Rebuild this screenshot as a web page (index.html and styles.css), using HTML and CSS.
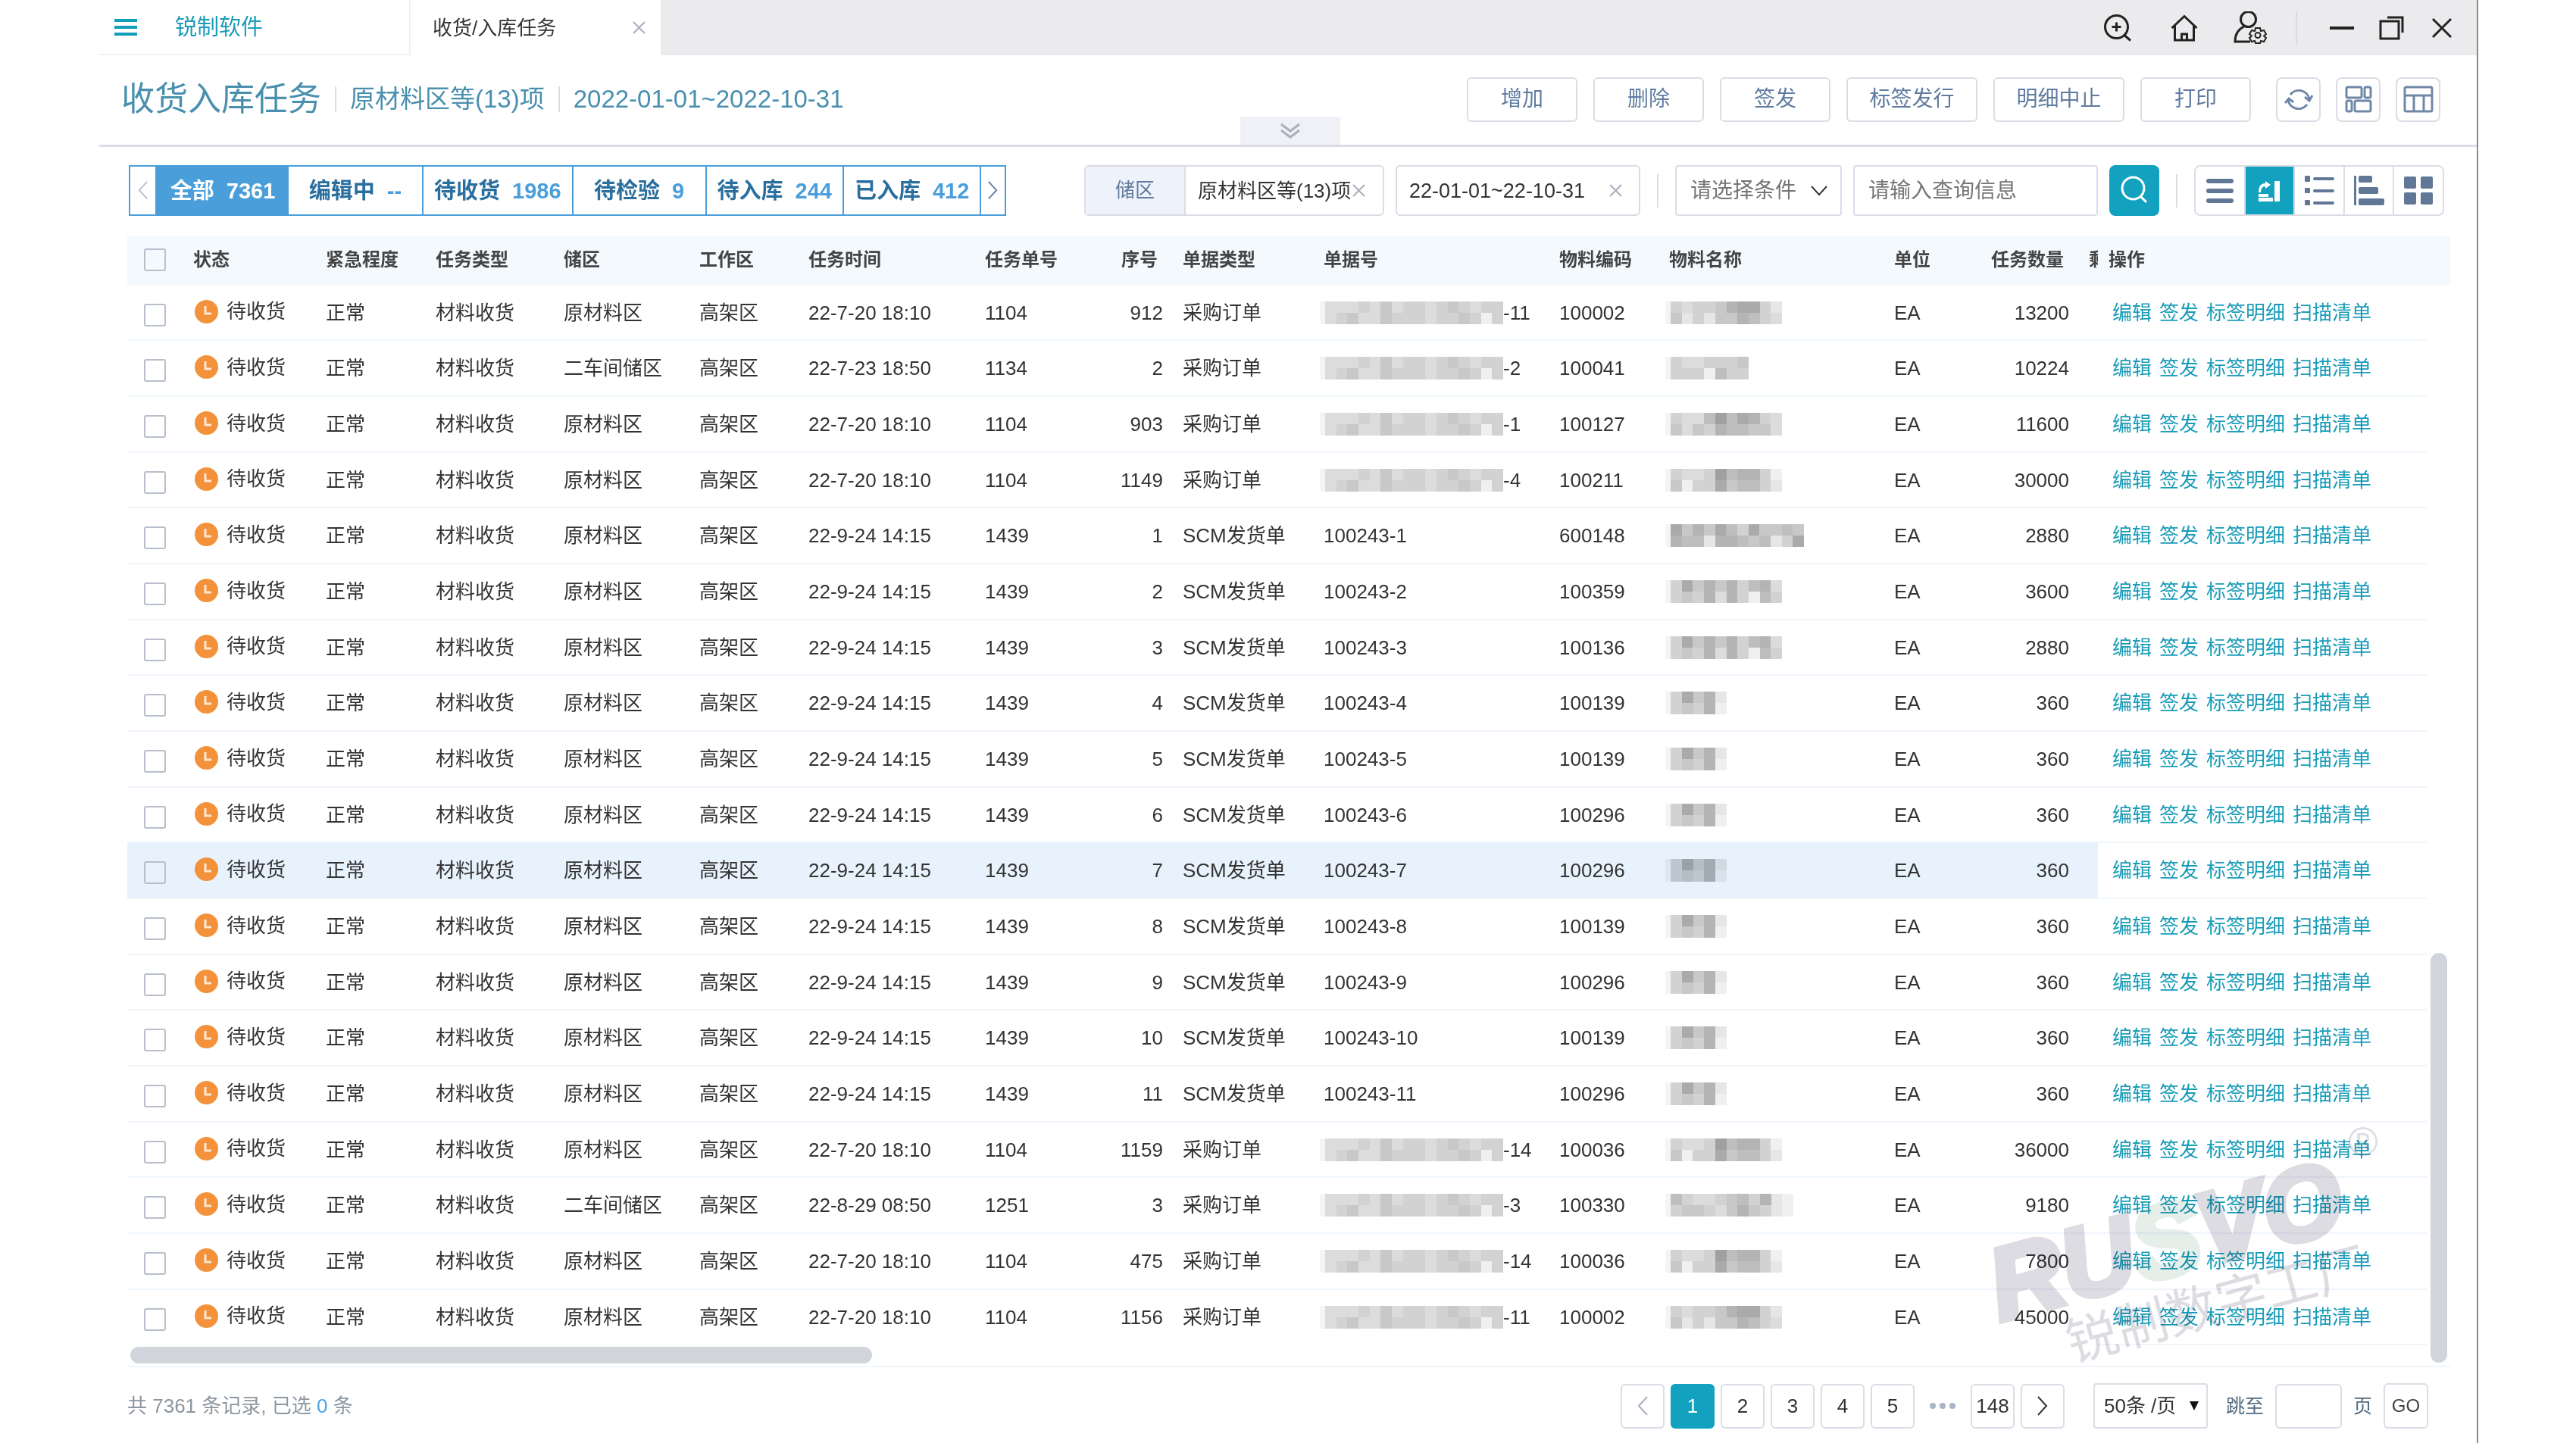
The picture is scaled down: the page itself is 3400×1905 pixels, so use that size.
FILE: index.html
```html
<!DOCTYPE html>
<html lang="zh-CN">
<head>
    <meta charset="UTF-8">
    <meta name="viewport" content="width=device-width, initial-scale=1.0">
    <title>收货入库任务 - 锐制软件</title>
    <link rel="stylesheet" href="styles.css">
</head>
<body>

<div class="window">
    <header class="topbar">
        <div class="brand">
            <button class="menu-btn" aria-label="菜单"><span></span><span></span><span></span></button>
            <a href="#">锐制软件</a>
        </div>
        <div class="tab">
            <span>收货/入库任务</span>
            <button class="close-btn" aria-label="关闭标签"><svg viewBox="0 0 16 16"><path d="M1 1L15 15M15 1L1 15"/></svg></button>
        </div>
        <div class="top-icons">
            <button aria-label="放大"><svg viewBox="0 0 44 44"><circle cx="21.500" cy="20.500" r="15"/><path d="M15.500 20.500h12M21.500 14.500v12M32 31.500l8 7"/></svg></button>
            <button aria-label="首页"><svg viewBox="0 0 44 44"><path d="M6.500 22L23 6.500L39.500 22M10.500 19v19h25V19M19.500 38v-8h7v8"/></svg></button>
            <button aria-label="用户设置"><svg viewBox="0 0 44 44"><circle cx="19.500" cy="10.500" r="10"/><path d="M14 20C5 24 2 31 2 40h20"/><path d="M29 22h6l1 4l4-1l3 5l-3 2.500l3 2.500l-3 5l-4-1l-1 3h-6l-1-3l-4 1l-3-5l3-2.500l-3-2.500l3-5l4 1z" stroke-width="2"/><circle cx="32" cy="31.500" r="3.500" stroke-width="2"/></svg></button>
        </div>
        <div class="win-icons">
            <button aria-label="最小化"><svg viewBox="0 0 44 44"><path d="M6 22h32" stroke-width="4"/></svg></button>
            <button aria-label="还原"><svg viewBox="0 0 44 44"><path d="M8 13h24v23H8zM17 8h20v20"/></svg></button>
            <button aria-label="关闭"><svg viewBox="0 0 44 44"><path d="M12 10l24 24M36 10L12 34"/></svg></button>
        </div>
    </header>

    <section class="page-head">
        <div class="titles">
            <h1>收货入库任务</h1>
            <p>原材料区等(13)项</p>
            <p>2022-01-01~2022-10-31</p>
        </div>
        <div class="actions">
            <button>增加</button>
            <button>删除</button>
            <button>签发</button>
            <button class="wide">标签发行</button>
            <button class="wide">明细中止</button>
            <button>打印</button>
        </div>
        <div class="tools">
            <button aria-label="刷新"><svg viewBox="0 0 40 40"><path d="M9 14A14 14 0 0 1 34 20M31 27A14 14 0 0 1 6 21M28 17l6 5l4-7M2 25l5-6l6 5"/></svg></button>
            <button aria-label="布局"><svg viewBox="0 0 40 40"><rect x="4" y="4" width="20" height="14" rx="2"/><rect x="28" y="4" width="8" height="14" rx="2"/><rect x="4" y="22" width="7" height="14" rx="2"/><rect x="15" y="22" width="21" height="14" rx="2"/></svg></button>
            <button aria-label="列设置"><svg viewBox="0 0 40 40"><rect x="2" y="4" width="36" height="32" rx="2"/><path d="M2 15h36M14 15v21M27 15v21"/></svg></button>
        </div>
        <button class="collapse" aria-label="展开"><svg viewBox="0 0 28 22"><path d="M2 2l12 9L26 2M2 10l12 9l12-9"/></svg></button>
    </section>

    <main>
        <div class="filter-bar">
            <div class="status-tabs">
                <button class="arrow off" aria-label="上一组"><svg viewBox="0 0 16 28"><path d="M14 2L3 14l11 12"/></svg></button>
                <button class="active">全部 <b>7361</b></button>
                <button>编辑中 <b>--</b></button>
                <button>待收货 <b>1986</b></button>
                <button>待检验 <b>9</b></button>
                <button>待入库 <b>244</b></button>
                <button>已入库 <b>412</b></button>
                <button class="arrow" aria-label="下一组"><svg viewBox="0 0 16 28"><path d="M2 2l11 12L2 26"/></svg></button>
            </div>
            <div class="filters">
                <div class="field area">
                    <label for="area">储区</label>
                    <input type="text" id="area" value="原材料区等(13)项">
                    <button class="close-btn" aria-label="清除储区"><svg viewBox="0 0 16 16"><path d="M1 1L15 15M15 1L1 15"/></svg></button>
                </div>
                <div class="field date">
                    <input type="text" aria-label="日期" value="22-01-01~22-10-31">
                    <button class="close-btn" aria-label="清除日期"><svg viewBox="0 0 16 16"><path d="M1 1L15 15M15 1L1 15"/></svg></button>
                </div>
                <span class="sep"></span>
                <div class="select cond">
                    <select aria-label="条件"><option>请选择条件</option></select>
                    <svg viewBox="0 0 24 16"><path d="M2 2l10 11L22 2"/></svg>
                </div>
                <input class="query" type="text" aria-label="查询" placeholder="请输入查询信息">
                <button class="search" aria-label="查询"><svg viewBox="0 0 40 40"><circle cx="18.500" cy="16.500" r="14.500"/><path d="M28 27l8 8"/></svg></button>
                <span class="sep"></span>
                <div class="views">
                    <button aria-label="列表"><svg viewBox="0 0 40 40"><rect x="2" y="4" width="36" height="6" rx="3"/><rect x="2" y="17" width="36" height="6" rx="3"/><rect x="2" y="30" width="36" height="6" rx="3"/></svg></button>
                    <button class="active" aria-label="横向"><svg viewBox="0 0 40 40"><rect x="27" y="7" width="7" height="27"/><rect x="6" y="29" width="19" height="5"/><rect x="6" y="24" width="13" height="4"/><path d="M6 22c0-8 3-12 9-12V7l7 5l-7 5v-3c-4 0-6 3-6 8z"/></svg></button>
                    <button aria-label="明细"><svg viewBox="0 0 40 40"><rect x="1" y="0" width="7" height="8" rx="1"/><rect x="1" y="16" width="7" height="7" rx="1"/><rect x="1" y="32" width="7" height="7" rx="1"/><rect x="12" y="2" width="28" height="4" rx="2"/><rect x="12" y="18" width="28" height="4" rx="2"/><rect x="12" y="34" width="28" height="4" rx="2"/></svg></button>
                    <button aria-label="甘特图"><svg viewBox="0 0 40 40"><rect x="0" y="0" width="3" height="39"/><rect x="6" y="0" width="18" height="9" rx="2"/><rect x="6" y="15" width="26" height="9" rx="2"/><rect x="6" y="30" width="34" height="9" rx="2"/></svg></button>
                    <button aria-label="卡片"><svg viewBox="0 0 40 40"><rect x="1" y="1" width="16" height="16" rx="2"/><rect x="23" y="1" width="16" height="16" rx="2"/><rect x="1" y="22" width="16" height="16" rx="2"/><rect x="23" y="22" width="16" height="16" rx="2"/></svg></button>
                </div>
            </div>
        </div>

        <div class="table-area">
            <table>
                <colgroup>
                    <col class="c-check"><col class="c-status"><col class="c-urgent"><col class="c-type"><col class="c-area">
                    <col class="c-work"><col class="c-time"><col class="c-order"><col class="c-seq"><col class="c-doctype">
                    <col class="c-doc"><col class="c-code"><col class="c-name"><col class="c-unit"><col class="c-qty"><col class="c-left"><col>
                </colgroup>
                <thead>
                    <tr>
                        <th class="check"><input type="checkbox" aria-label="全选"></th>
                        <th>状态</th>
                        <th>紧急程度</th>
                        <th>任务类型</th>
                        <th>储区</th>
                        <th>工作区</th>
                        <th>任务时间</th>
                        <th>任务单号</th>
                        <th class="num">序号</th>
                        <th>单据类型</th>
                        <th>单据号</th>
                        <th>物料编码</th>
                        <th>物料名称</th>
                        <th>单位</th>
                        <th class="num">任务数量</th>
                        <th class="cut">剩</th>
                        <th class="ops">操作</th>
                    </tr>
                </thead>
                <tbody id="rows"></tbody>
            </table>
            <div class="gutter">
                <div class="gutter-head"></div>
                <div class="v-thumb"></div>
            </div>
        </div>
        <div class="h-track"><div class="h-thumb"></div></div>

        <footer>
            <p class="total">共 7361 条记录, 已选 <b>0</b> 条</p>
            <nav class="pages">
                <button class="off" aria-label="上一页"><svg viewBox="0 0 16 28"><path d="M14 2L3 14l11 12"/></svg></button>
                <button class="active">1</button>
                <button>2</button>
                <button>3</button>
                <button>4</button>
                <button>5</button>
                <span class="dots"><i></i><i></i><i></i></span>
                <button>148</button>
                <button aria-label="下一页"><svg viewBox="0 0 16 28"><path d="M2 2l11 12L2 26"/></svg></button>
            </nav>
            <div class="select size">
                <select aria-label="每页条数"><option>50条 /页</option></select>
                <svg viewBox="0 0 12 12"><path d="M0 0h12L6 12z"/></svg>
            </div>
            <div class="jump">
                <label for="jump">跳至</label>
                <input type="text" id="jump">
                <span>页</span>
                <button>GO</button>
            </div>
        </footer>
    </main>

    <svg class="watermark" viewBox="0 0 520 320" aria-hidden="true">
        <text class="logo" x="20" y="254" transform="rotate(-15 20 254)">RU<tspan class="leaf">S</tspan>VO</text>
        <text class="slogan" x="115" y="308" transform="rotate(-15 115 308)">锐制数字工厂</text>
        <text class="reg" x="479" y="36">®</text>
    </svg>
</div>

<script src="script.js"></script>
</body>
</html>
```
FILE: styles.css
```css
* {
    box-sizing: border-box;
}

body {
    margin: 0;
    background-color: #fff;
    color: #333;
    font-family: "Liberation Sans", "Noto Sans CJK SC", sans-serif;
    font-size: 26px;
    line-height: 36px;
}

h1, p {
    margin: 0;
    font-weight: normal;
}

button, input, select {
    margin: 0;
    padding: 0;
    border: none;
    background: none;
    color: inherit;
    font: inherit;
}

button {
    cursor: pointer;
}

a {
    color: #1a9cb8;
    text-decoration: none;
}

svg {
    display: block;
    fill: none;
    stroke: currentColor;
    stroke-width: 2;
}

.window {
    position: relative;
    min-height: 100vh;
    margin: 0 129px 0 131px;
    border-right: 2px solid #8c8c8c;
}

/* top bar */
.topbar {
    display: flex;
    align-items: center;
    height: 73px;
    padding-right: 26px;
    background-color: #ebebed;
}

.brand {
    display: flex;
    align-items: center;
    gap: 50px;
    width: 411px;
    height: 73px;
    padding-left: 20px;
    background-color: #fff;
    border-right: 2px solid #eef1f8;
    border-bottom: 2px solid #eef1f8;
    font-size: 29px;
}

.menu-btn {
    display: flex;
    flex-direction: column;
    gap: 5px;
    width: 30px;
}

.menu-btn span {
    height: 4px;
    background-color: #0f9fbc;
}

.tab {
    display: flex;
    align-items: center;
    justify-content: space-between;
    width: 330px;
    height: 73px;
    padding: 0 20px 0 29px;
    background-color: #fff;
}

.close-btn {
    width: 17px;
    color: #a9b0bc;
}

.top-icons, .win-icons {
    display: flex;
    color: #222;
}

.top-icons svg, .win-icons svg {
    width: 44px;
    stroke-width: 3;
}

.top-icons {
    gap: 44px;
    margin-left: auto;
    padding-right: 38px;
    border-right: 2px solid #d9dae4;
}

.win-icons {
    gap: 21px;
    padding-left: 37px;
}

/* page head */
.page-head {
    position: relative;
    display: flex;
    align-items: center;
    height: 121px;
    padding: 0 48px 2px 29px;
    border-bottom: 3px solid #dcdce6;
}

.titles {
    display: flex;
    align-items: center;
    color: #4a90ae;
}

.titles h1 {
    font-size: 44px;
    line-height: 56px;
}

.titles p {
    margin-left: 18px;
    padding-left: 18px;
    border-left: 2px solid #dcdce6;
    font-size: 33px;
    line-height: 34px;
}

.actions {
    display: flex;
    gap: 21px;
    margin-left: auto;
    margin-right: 33px;
}

.actions button {
    width: 146px;
    height: 59px;
    border: 2px solid #dcdce6;
    border-radius: 6px;
    color: #5f7ba0;
    font-size: 28px;
}

.actions .wide {
    width: 173px;
}

.tools {
    display: flex;
    gap: 20px;
}

.tools button {
    display: flex;
    align-items: center;
    justify-content: center;
    width: 59px;
    height: 59px;
    border: 2px solid #dcdce6;
    border-radius: 8px;
    color: #7088a8;
}

.tools svg {
    width: 40px;
    stroke-width: 3;
}

.collapse {
    position: absolute;
    left: 48%;
    bottom: 0;
    display: flex;
    align-items: center;
    justify-content: center;
    width: 132px;
    height: 37px;
    background-color: #eff1f6;
    color: #a9b0bc;
}

.collapse svg {
    width: 28px;
    stroke-width: 3;
}

main {
    padding: 24px 35px 0 37px;
}

/* filters */
.filter-bar {
    display: flex;
    justify-content: space-between;
    height: 67px;
    margin: 0 8px 26px 2px;
}

.status-tabs {
    display: flex;
    border: 2px solid #4a9fdb;
    color: #2b6f9f;
    font-size: 29px;
    font-weight: bold;
}

.status-tabs button {
    display: flex;
    align-items: center;
    justify-content: center;
    gap: 16px;
    min-width: 176px;
    padding: 0 14px;
    border-left: 2px solid #4a9fdb;
}

.status-tabs b {
    color: #4a9fdb;
}

.status-tabs .active {
    background-color: #4a9fdb;
    color: #fff;
}

.status-tabs .active b {
    color: #fff;
}

.status-tabs .active + button {
    border-left: none;
}

.status-tabs .arrow {
    min-width: 33px;
    padding: 0;
    color: #5f7ba0;
}

.status-tabs .arrow:first-child {
    border-left: none;
}

.status-tabs svg {
    width: 15px;
}

.status-tabs .off {
    color: #b8bcc8;
}

.filters {
    display: flex;
    gap: 15px;
}

.field {
    display: flex;
    align-items: center;
    overflow: hidden;
    border: 2px solid #dcdce6;
    border-radius: 6px;
}

.field label {
    width: 132px;
    background-color: #eef2fa;
    border-right: 2px solid #dcdce6;
    color: #5f7ba0;
    line-height: 63px;
    text-align: center;
}

.area {
    width: 396px;
}

.area input {
    width: 220px;
    padding-left: 16px;
}

.date {
    width: 323px;
}

.date input {
    width: 280px;
    padding-left: 16px;
    font-size: 27px;
}

.sep {
    width: 2px;
    height: 44px;
    margin: auto 7px;
    background-color: #dcdce6;
}

.select {
    position: relative;
    display: flex;
    border: 2px solid #dcdce6;
    border-radius: 4px;
}

.select select {
    width: 100%;
    appearance: none;
}

.select svg {
    position: absolute;
    top: 0;
    right: 16px;
    bottom: 0;
    width: 24px;
    margin: auto;
    pointer-events: none;
}

.cond {
    width: 220px;
}

.cond select {
    padding-left: 18px;
    color: #757575;
    font-size: 28px;
}

.query {
    width: 323px;
    padding-left: 18px;
    border: 2px solid #dcdce6;
    border-radius: 4px;
    font-size: 28px;
}

.query::placeholder {
    color: #757575;
}

.search {
    display: flex;
    align-items: center;
    justify-content: center;
    width: 66px;
    border-radius: 8px;
    background-color: #12a1bf;
    color: #fff;
}

.search svg {
    width: 40px;
    stroke-width: 3;
}

.views {
    display: flex;
    width: 330px;
    border: 2px solid #dcdce6;
    border-radius: 8px;
    color: #617796;
}

.views button {
    display: flex;
    flex: 1;
    align-items: center;
    justify-content: center;
}

.views button + button {
    border-left: 2px solid #dcdce6;
}

.views .active {
    background-color: #12a1bf;
    color: #fff;
}

.views svg {
    width: 40px;
    fill: currentColor;
    stroke: none;
}

/* table */
.table-area {
    display: flex;
}

table {
    flex: 1;
    width: 100%;
    border-spacing: 0;
    table-layout: fixed;
    white-space: nowrap;
}

.c-check { width: 87px; }
.c-status { width: 175px; }
.c-urgent { width: 145px; }
.c-type { width: 169px; }
.c-area { width: 179px; }
.c-work { width: 144px; }
.c-time { width: 233px; }
.c-order { width: 140px; }
.c-seq { width: 121px; }
.c-doctype { width: 186px; }
.c-doc { width: 311px; }
.c-code { width: 145px; }
.c-name { width: 297px; }
.c-unit { width: 100px; }
.c-qty { width: 157px; }
.c-left { width: 12px; }

th {
    height: 66px;
    padding: 0 0 3px;
    background-color: #f4f9fd;
    color: #444;
    font-size: 24px;
    text-align: left;
}

td {
    height: 74px;
    padding: 0;
    border-bottom: 2px solid #eef5fb;
}

tr:nth-child(3n+1) td {
    height: 73px;
}

tr:last-child td:not(.ops) {
    border-bottom-color: transparent;
}

.hover td:not(.ops) {
    background-color: #e7f2fc;
}

.check {
    padding-left: 22px;
}

input[type="checkbox"] {
    display: block;
    width: 29px;
    height: 30px;
    border: 2px solid #b8becb;
    border-radius: 3px;
    appearance: none;
}

td input[type="checkbox"] {
    margin-top: 6px;
}

.status {
    display: flex;
    align-items: center;
    gap: 11px;
    padding: 0 0 3px 2px;
}

.status svg {
    width: 31px;
}

.num {
    padding-right: 26px;
    text-align: right;
}

th.num {
    padding-right: 33px;
}

.cut {
    overflow: hidden;
}

td.ops {
    padding-left: 19px;
}

th.ops {
    padding-left: 14px;
}

.ops a + a {
    margin-left: 10px;
}

.mask {
    display: flex;
    align-items: center;
}

.mosaic {
    height: 30px;
    margin-left: 2px;
    box-shadow: -7px 0 #f3f4f5;
    mix-blend-mode: multiply;
    stroke: none;
}

.gutter {
    display: flex;
    flex-direction: column;
    width: 31px;
}

.gutter-head {
    height: 66px;
    background-color: #f4f9fd;
}

.v-thumb {
    width: 22px;
    height: 541px;
    margin: auto 0 -23px 5px;
    border-radius: 11px;
    background-color: #d1d5db;
}

.h-track {
    padding: 2px 4px 3px;
    border-bottom: 2px solid #eef5fb;
}

.h-thumb {
    width: 32%;
    height: 22px;
    border-radius: 11px;
    background-color: #d1d5db;
}

/* footer */
footer {
    display: flex;
    align-items: center;
    height: 99px;
    padding: 3px 29px 0 0;
}

.total {
    margin-right: auto;
    color: #8c96a0;
}

.total b {
    color: #4aa5e5;
    font-weight: normal;
}

.pages {
    display: flex;
    gap: 8px;
    margin-right: 38px;
}

.pages button, .pages .dots {
    display: flex;
    align-items: center;
    justify-content: center;
    width: 58px;
    height: 59px;
}

.pages button, .jump button, .jump input {
    border: 2px solid #dcdce6;
    border-radius: 6px;
}

.pages svg {
    width: 16px;
}

.pages .off {
    color: #a9b0bc;
}

.pages .active {
    border-color: #12a1bf;
    background-color: #12a1bf;
    color: #fff;
}

.pages .dots {
    gap: 5px;
}

.dots i {
    width: 8px;
    height: 8px;
    border-radius: 50%;
    background-color: #a9b4c4;
}

.size {
    width: 151px;
    height: 60px;
    margin-right: 24px;
}

.size select {
    padding-left: 12px;
}

.size svg {
    right: 10px;
    width: 12px;
    fill: #111;
    stroke: none;
}

.jump {
    display: flex;
    align-items: center;
    gap: 15px;
    color: #4f6a80;
}

.jump label, .jump span {
    font-size: 25px;
}

.jump input {
    width: 88px;
    height: 59px;
}

.jump button {
    width: 59px;
    height: 60px;
    color: #444;
    font-size: 24px;
}

/* watermark over the table corner */
.watermark {
    position: absolute;
    right: 129px;
    bottom: 95px;
    width: 520px;
    height: 320px;
    overflow: visible;
    fill: #dddce2;
    stroke: none;
    mix-blend-mode: multiply;
    pointer-events: none;
}

.logo {
    font-size: 134px;
    font-style: italic;
    font-weight: bold;
    stroke: #dddce2;
    stroke-width: 8;
}

.leaf {
    fill: #e6eeea;
    stroke: #e6eeea;
}

.slogan {
    font-size: 68px;
}

.reg {
    font-size: 54px;
}
```
FILE: script.js
```js
// замаскированные значения: две строки оттенков, 0 - тёмный, 9 - светлый
const DOC = ['6665646556545655', '6546645556554585'];
const A = ['5655421157', '4757442356'];
const B = ['5665554', '5558355'];
const C = ['5663031256', '4645233446'];
const D = ['5665032258', '4855143357'];
const E = ['142413514434', '233722343751'];
const F = ['5142425326', '5452625835'];
const G = ['51427', '54528'];
const H = ['35665435278', '54456424578'];

// 储区, 时间, 任务单号, 序号, 单据号, 物料编码, 物料名称, 数量
const rows = [
    ['原材料区', '22-7-20 18:10', 1104, 912, '-11', 100002, A, 13200],
    ['二车间储区', '22-7-23 18:50', 1134, 2, '-2', 100041, B, 10224],
    ['原材料区', '22-7-20 18:10', 1104, 903, '-1', 100127, C, 11600],
    ['原材料区', '22-7-20 18:10', 1104, 1149, '-4', 100211, D, 30000],
    ['原材料区', '22-9-24 14:15', 1439, 1, '100243-1', 600148, E, 2880],
    ['原材料区', '22-9-24 14:15', 1439, 2, '100243-2', 100359, F, 3600],
    ['原材料区', '22-9-24 14:15', 1439, 3, '100243-3', 100136, F, 2880],
    ['原材料区', '22-9-24 14:15', 1439, 4, '100243-4', 100139, G, 360],
    ['原材料区', '22-9-24 14:15', 1439, 5, '100243-5', 100139, G, 360],
    ['原材料区', '22-9-24 14:15', 1439, 6, '100243-6', 100296, G, 360],
    ['原材料区', '22-9-24 14:15', 1439, 7, '100243-7', 100296, G, 360],
    ['原材料区', '22-9-24 14:15', 1439, 8, '100243-8', 100139, G, 360],
    ['原材料区', '22-9-24 14:15', 1439, 9, '100243-9', 100296, G, 360],
    ['原材料区', '22-9-24 14:15', 1439, 10, '100243-10', 100139, G, 360],
    ['原材料区', '22-9-24 14:15', 1439, 11, '100243-11', 100296, G, 360],
    ['原材料区', '22-7-20 18:10', 1104, 1159, '-14', 100036, D, 36000],
    ['二车间储区', '22-8-29 08:50', 1251, 3, '-3', 100330, H, 9180],
    ['原材料区', '22-7-20 18:10', 1104, 475, '-14', 100036, D, 7800],
    ['原材料区', '22-7-20 18:10', 1104, 1156, '-11', 100002, A, 45000]
];

function mosaic(shades) {
    const n = shades[0].length;
    let cells = '';
    shades.forEach((line, y) => {
        [...line].forEach((s, x) => {
            const g = 160 + s * 10;
            cells += `<rect x="${x}" y="${y}" width="1" height="1" fill="rgb(${g},${g},${g})"/>`;
        });
    });
    return `<svg class="mosaic" width="${Math.round(n * 14.7)}" viewBox="0 0 ${n} 2" preserveAspectRatio="none" shape-rendering="crispEdges">${cells}</svg>`;
}

document.getElementById('rows').innerHTML = rows.map((r, i) => {
    const masked = r[4][0] === '-';
    const doc = masked ? `<div class="mask">${mosaic(DOC)}${r[4]}</div>` : r[4];
    return `<tr${i === 10 ? ' class="hover"' : ''}>
        <td class="check"><input type="checkbox" aria-label="选择第${i + 1}行"></td>
        <td><div class="status"><svg viewBox="0 0 31 31"><circle cx="15.5" cy="15.5" r="15.5" fill="#f3923a" stroke="none"/><path d="M14 8v10h8" stroke="#fde8d4" stroke-width="3"/></svg>待收货</div></td>
        <td>正常</td>
        <td>材料收货</td>
        <td>${r[0]}</td>
        <td>高架区</td>
        <td>${r[1]}</td>
        <td>${r[2]}</td>
        <td class="num">${r[3]}</td>
        <td>${masked ? '采购订单' : 'SCM发货单'}</td>
        <td>${doc}</td>
        <td>${r[5]}</td>
        <td><div class="mask">${mosaic(r[6])}</div></td>
        <td>EA</td>
        <td class="num">${r[7]}</td>
        <td></td>
        <td class="ops"><a href="#">编辑</a><a href="#">签发</a><a href="#">标签明细</a><a href="#">扫描清单</a></td>
    </tr>`;
}).join('');
```
